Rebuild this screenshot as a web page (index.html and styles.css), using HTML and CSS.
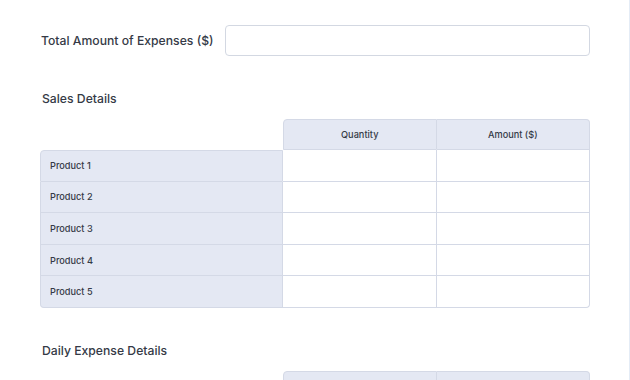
FILE: index.html
```html
<!DOCTYPE html>
<html lang="en">
<head>
  <meta charset="UTF-8" />
  <meta name="viewport" content="width=device-width, initial-scale=1" />
  <title>Expense Report</title>
  <link rel="stylesheet" href="styles.css">
</head>
<body>
  <div class="page">
    <div class="field">
      <label for="total">Total Amount of Expenses ($)</label>
      <input type="text" id="total" />
    </div>

    <section class="section">
      <h2>Sales Details</h2>
      <table class="grid">
        <thead>
          <tr>
            <th class="blank"></th>
            <th>Quantity</th>
            <th>Amount ($)</th>
          </tr>
        </thead>
        <tbody>
          <tr><td class="name">Product 1</td><td></td><td></td></tr>
          <tr><td class="name">Product 2</td><td></td><td></td></tr>
          <tr><td class="name">Product 3</td><td></td><td></td></tr>
          <tr><td class="name">Product 4</td><td></td><td></td></tr>
          <tr><td class="name">Product 5</td><td></td><td></td></tr>
        </tbody>
      </table>
    </section>

    <section class="section">
      <h2>Daily Expense Details</h2>
      <table class="grid">
        <thead>
          <tr>
            <th class="blank"></th>
            <th></th>
            <th></th>
          </tr>
        </thead>
      </table>
    </section>
  </div>
</body>
</html>
```

FILE: styles.css
```css
body {
  margin: 0;
  padding: 0;
  background: #fff;
  font-family: Inter, 'Noto Sans', sans-serif;
  color: #353a46;
  overflow: hidden;
}

.page {
  width: 630px;
  height: 380px;
  padding: 25px 0 0 40px;
  box-sizing: border-box;
  border-right: 1px solid #e4ecf6;
  overflow: hidden;
}

.field {
  display: flex;
  align-items: center;
  width: 550px;
}

.field label {
  width: 185px;
  flex-shrink: 0;
  font-size: 12.2px;
  font-weight: 500;
  padding-left: 1px;
  box-sizing: border-box;
}

.field input {
  flex: 1;
  height: 31px;
  box-sizing: border-box;
  border: 1px solid #d3d8e2;
  border-radius: 4px;
  background: #fff;
}

.section {
  margin-top: 35px;
}

.section h2 {
  margin: 0 0 12px 2px;
  font-size: 12.2px;
  font-weight: 500;
  line-height: 16px;
}

.grid {
  width: 550px;
  border-collapse: separate;
  border-spacing: 0;
  table-layout: fixed;
  font-size: 9.2px;
  font-weight: 500;
}

.grid th, .grid td {
  height: 31px;
  padding: 0;
  box-sizing: border-box;
  border-right: 1px solid #d4d9e6;
  border-bottom: 1px solid #d4d9e6;
}

.grid th {
  background: #e4e8f3;
  border-top: 1px solid #d4d9e6;
  font-weight: 500;
  text-align: center;
}

.grid th.blank {
  width: 243px;
  background: none;
  border: none;
}

.grid th:nth-child(2) {
  border-top-left-radius: 4px;
  border-left: 1px solid #d4d9e6;
}

.grid th:last-child {
  border-top-right-radius: 4px;
}

.grid td {
  height: 31.6px;
}

.grid td.name {
  background: #e4e8f3;
  border-left: 1px solid #d4d9e6;
  padding-left: 9px;
}

.grid tbody tr:first-child td.name {
  border-top: 1px solid #d4d9e6;
  border-top-left-radius: 4px;
}

.grid tbody tr:last-child td.name {
  border-bottom-left-radius: 4px;
}

.grid tbody tr:last-child td:last-child {
  border-bottom-right-radius: 4px;
}
```
